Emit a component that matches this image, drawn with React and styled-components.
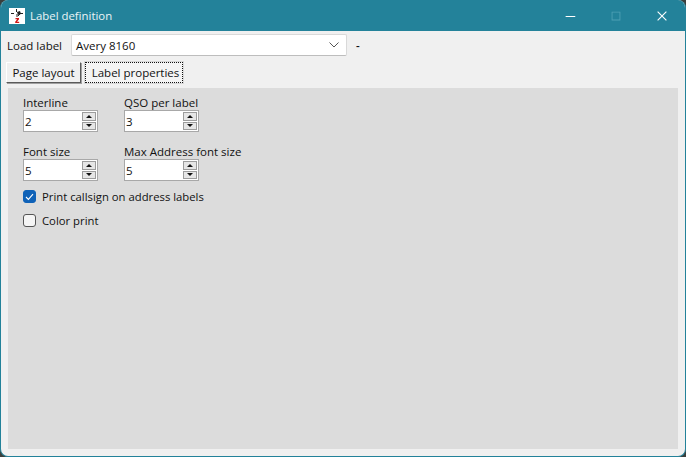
import React from "react";
import styled, { createGlobalStyle } from "styled-components";
import { VscChromeMinimize, VscChromeMaximize, VscChromeClose } from "react-icons/vsc";

const GlobalStyle = createGlobalStyle`
  html, body {
    margin: 0;
    padding: 0;
    background: #3a3f3c;
  }
  body {
    font-family: "Open Sans", "Noto Sans", sans-serif;
    font-size: 11.5px;
    color: #111;
  }
`;

const Win = styled.div`
  width: 686px;
  height: 457px;
  box-sizing: border-box;
  display: flex;
  flex-direction: column;
  border: 1px solid #23829a;
  border-top: 0;
  border-radius: 8px;
  overflow: hidden;
  background: #f0f0f0;
`;

const TitleBar = styled.div`
  height: 31px;
  flex: none;
  display: flex;
  align-items: center;
  background: #23829a;
  color: #fff;
  padding-left: 8px;
`;

const AppIcon = styled.svg`
  width: 16px;
  height: 16px;
  flex: none;
`;

const Title = styled.span`
  margin-left: 5px;
  flex: 1;
  font-size: 11.4px;
  color: #eaf4f6;
`;

const WinButton = styled.div`
  width: 46px;
  height: 31px;
  display: flex;
  align-items: center;
  justify-content: center;
  font-size: 14px;
  color: ${p => (p.$dim ? "#4fa0b4" : "#fff")};
`;

const Body = styled.div`
  flex: 1;
  display: flex;
  flex-direction: column;
  padding: 3px 7px 7px 5px;
  min-height: 0;
`;

const LoadRow = styled.div`
  height: 22px;
  display: flex;
  align-items: center;
`;

const LoadLabel = styled.span`
  width: 65px;
  padding-left: 1px;
  box-sizing: border-box;
`;

const Combo = styled.div`
  width: 276px;
  height: 22px;
  box-sizing: border-box;
  display: flex;
  align-items: center;
  justify-content: space-between;
  padding: 0 7px 0 4px;
  background: #fff;
  border: 1px solid #d9d9d9;
  border-bottom-color: #bdbdbd;
  border-radius: 2px;
`;

const Dash = styled.span`
  margin-left: 9px;
  font-weight: 600;
`;

const Tabs = styled.div`
  display: flex;
  gap: 4px;
  margin-top: 6px;
  height: 23px;
`;

const Tab = styled.div`
  width: ${p => p.$width}px;
  height: 21px;
  box-sizing: border-box;
  display: flex;
  align-items: center;
  justify-content: center;
  background: #f0f0f0;
  border: 1px solid;
  border-color: #fff #5a5a5a #5a5a5a #fff;
  box-shadow: 1px 1px 0 #a0a0a0;
  ${p =>
    p.$active &&
    `
    padding-left: 3px;
    border: 1px dotted #111;
    box-shadow: none;
    outline: 1px solid #d8d8d8;
    background: #f4f4f4;
  `}
`;

const Panel = styled.div`
  flex: 1;
  margin: 3px 0 0 2px;
  background: #dcdcdc;
  padding: 7px 15px;
  display: flex;
  flex-direction: column;
`;

const FieldGrid = styled.div`
  display: grid;
  grid-template-columns: 101px 1fr;
  row-gap: 11px;
`;

const Field = styled.div`
  display: flex;
  flex-direction: column;
  height: 38px;
`;

const FieldLabel = styled.label`
  height: 15px;
  line-height: 15px;
`;

const Spin = styled.div`
  width: 75px;
  height: 22px;
  box-sizing: border-box;
  display: flex;
  align-items: center;
  justify-content: space-between;
  padding-right: 1px;
  background: #fff;
  border: 1px solid #a8a8a8;
`;

const SpinValue = styled.span`
  padding-left: 1px;
`;

const SpinButtons = styled.div`
  width: 14px;
  height: 18px;
  display: flex;
  flex-direction: column;
  justify-content: space-between;
`;

const SpinButton = styled.div`
  height: 8.5px;
  display: flex;
  align-items: center;
  justify-content: center;
  background: #e6e6e6;
  border: 1px solid #9c9c9c;
  box-sizing: border-box;
  &::after {
    content: "";
    border-left: 3px solid transparent;
    border-right: 3px solid transparent;
    ${p =>
      p.$down ? "border-top: 3px solid #111;" : "border-bottom: 3px solid #111;"}
  }
`;

const CheckRow = styled.div`
  display: flex;
  align-items: center;
  height: 13px;
  gap: 6px;
  font-size: 11.3px;
  margin-top: ${p => (p.$first ? "8px" : "11px")};
`;

const Box = styled.div`
  width: 13px;
  height: 13px;
  box-sizing: border-box;
  border-radius: 3px;
  display: flex;
  align-items: center;
  justify-content: center;
  background: ${p => (p.$checked ? "#0f62b8" : "#f5f5f5")};
  border: 1px solid ${p => (p.$checked ? "#0f62b8" : "#555")};
`;

const Spinner = ({ value }) => (
  <Spin>
    <SpinValue>{value}</SpinValue>
    <SpinButtons>
      <SpinButton />
      <SpinButton $down />
    </SpinButtons>
  </Spin>
);

const fields = [
  { label: "Interline", value: 2 },
  { label: "QSO per label", value: 3 },
  { label: "Font size", value: 5 },
  { label: "Max Address font size", value: 5 }
];

const App = () => (
  <>
    <GlobalStyle />
    <Win>
      <TitleBar>
        <AppIcon viewBox="0 0 16 16">
          <rect width="16" height="16" fill="#fff" />
          <path d="M2 5.5h3M10 5.5h4M7.5 1v3M8 6v3M9 8l2-2" stroke="#222" strokeWidth="1" fill="none" />
          <path d="M8 4l3-1 1 3-3 1z" fill="#222" />
          <path d="M6.5 10h3.5v1.2L8 13.8h2.2V15H6.2v-1.2L8.2 11.2H6.5z" fill="#d01818" />
        </AppIcon>
        <Title>Label definition</Title>
        <WinButton><VscChromeMinimize /></WinButton>
        <WinButton $dim><VscChromeMaximize /></WinButton>
        <WinButton><VscChromeClose /></WinButton>
      </TitleBar>
      <Body>
        <LoadRow>
          <LoadLabel>Load label</LoadLabel>
          <Combo>
            Avery 8160
            <svg width="10" height="6" viewBox="0 0 10 6">
              <path d="M0.5 0.5L5 5L9.5 0.5" stroke="#555" fill="none" />
            </svg>
          </Combo>
          <Dash>-</Dash>
        </LoadRow>
        <Tabs>
          <Tab $width={75}>Page layout</Tab>
          <Tab $width={98} $active>Label properties</Tab>
        </Tabs>
        <Panel>
          <FieldGrid>
            {fields.map(field => (
              <Field key={field.label}>
                <FieldLabel>{field.label}</FieldLabel>
                <Spinner value={field.value} />
              </Field>
            ))}
          </FieldGrid>
          <CheckRow $first>
            <Box $checked>
              <svg width="9" height="8" viewBox="0 0 9 8">
                <path d="M1 4l2.4 2.4L8 1.2" stroke="#fff" strokeWidth="1.1" fill="none" />
              </svg>
            </Box>
            Print callsign on address labels
          </CheckRow>
          <CheckRow>
            <Box />
            Color print
          </CheckRow>
        </Panel>
      </Body>
    </Win>
  </>
);

export default App;
